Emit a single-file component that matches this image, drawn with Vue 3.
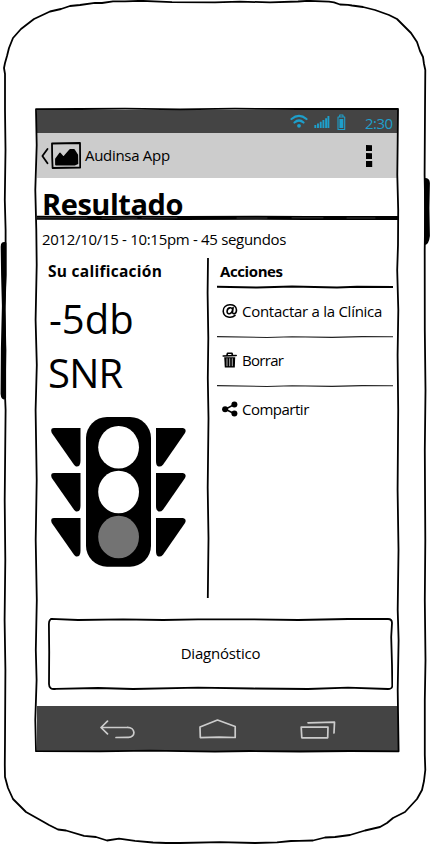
<script setup>
const actions = [
  { label: 'Contactar a la Clínica', icon: 'at' },
  { label: 'Borrar', icon: 'trash' },
  { label: 'Compartir', icon: 'share' },
]
const lampRows = [11, 56, 101]
</script>

<template>
  <main class="phone">
    <svg class="shell" viewBox="0 0 430 844" aria-hidden="true">
      <path d="M5 110V74L4 68L5 63L7 56L9 48L13 38L21 29L34 19L50 11.5L61 9L70 6L80 5L95 2.8L102 3L113 1.3L125 1.4L141 .8L172 2.2L215 2.3L240 1.6L270 2.4L298 1.5L308 .8L329 1.7L334 2.4L340 4.5L348 4.8L352 5.5L363 7L375 10L389 15L397 19L411 33L417 42L420 51L423 57L424 64L425.3 70L425 110L424.6 175L425.3 210L424.7 250L424.8 330L425.5 390L424.8 450L425.3 540L424.8 600L425.5 660L424.8 700L424.8 755L425.3 770L424 781L422 790L417 799L405 812L393 818L387 823L380 827L365 830.5L350 835L335 837L325 837.5L313 840.5L299 840.8L291 841L277 842.4L255 843L220 842.2L180 843L166 843L153 842.5L135 840.8L119 838.7L107 840.5L96 837L84 835.8L66 830.5L58 829.5L49 825L42 821L26 812L17 803L13 799L8 788L5 777L4.8 765L5 740L5.4 670L4.6 620L5.3 560L4.7 500L5.2 450L5.6 410L4.8 390L5.4 350L4.6 310L5.6 275L5.6 230L4.8 200L5.5 150Z" />
      <path class="key" d="M5.5 243Q1.5 242 1.6 247L2 275L2.8 306L1.8 348L1.5 394Q2 400 5.2 398V350L4.5 306L5.5 275Z" />
      <path class="key" d="M425 179Q428.8 179 429 183L428.5 208L429 236Q428 244 425 244Z" />
      <path d="M36 109.2L80 109L125 108.7L180 109.3L235 108.7L300 109L398 109L397.7 140L397.3 175L398.2 210L398 245L397.2 270L398.3 310L397.6 355L398.2 410L397.6 490L398.5 550L397.7 610L398.6 640L397.7 690L398.6 751.3L350 751L300 751.5L250 751L215 751.6L150 750.7L100 751.4L36 751.2L35.3 720L36.6 680L35.8 650L36.8 600L35.7 540L36.7 480L35.6 410L36.8 365L35.6 320L36.7 265L36.3 230L35.3 190L36.7 145Z" />
    </svg>

    <section class="screen">
      <header class="status">
        <svg class="signals" viewBox="0 0 58 20" aria-hidden="true">
          <g class="wifi"><path d="M1.5 7Q9 .8 16.5 7M4.5 10.5Q9 6.5 13.5 10.5" /><circle cx="9" cy="13.8" r="1.9" /></g>
          <path class="bars" d="M25.3 13v3M28 11.5V16M30.7 9.8V16M33.4 8V16M36.1 6.2V16M38.4 4V16" />
          <path class="battery" d="M48 5H54.7V17.5H48ZM49.7 4.5V3H53V4.5" />
          <path class="charge" d="M49.4 7H53.3V16H49.4Z" />
        </svg>
        <span class="clock">2:30</span>
      </header>

      <header class="appbar">
        <svg class="applogo" viewBox="0 0 42 30" aria-hidden="true">
          <path d="M8.5 10L3.4 17L8.5 24.2" />
          <path d="M13 4.5L41 4L41.2 28.5L13.6 29L13.2 19Z" />
          <path class="chart" d="M17 25.5V20L21 14.5L24.5 18.5L31 11H35L38.2 16L38.4 24.5L36 25.5Z" />
        </svg>
        <span class="appname">Audinsa App</span>
        <svg class="more" viewBox="0 0 8 24" aria-hidden="true"><path d="M1 1L7 1.2V7H1ZM1 9L7 9.2V15H1ZM1 17H7.2V23H1Z" /></svg>
      </header>

      <div class="title">
        <h1>Resultado</h1>
        <svg viewBox="0 0 361 6" aria-hidden="true">
          <path class="thick" d="M0 2.8L70 3L95 2.7L145 3.1L220 2.7L270 3L361 3" />
          <path class="shade" d="M0 2.8H50M65 3H100M105 2.8H140M200 3H230M255 2.8H286M310 3H338" />
        </svg>
      </div>
      <p class="date">2012/10/15 - 10:15pm - 45 segundos</p>

      <div class="columns">
        <section class="rating">
          <h2>Su calificación</h2>
          <p class="score"><span class="db">-5db</span><br><span class="snr">SNR</span></p>
          <svg class="lights" viewBox="0 0 136 150" aria-hidden="true">
            <g v-for="y in lampRows" :key="y" :transform="`translate(0 ${y})`">
              <path d="M3 0H29.5V33Q29.5 39 25 38.5Q24 38 23 36.7L.8 5Q-1 0 3 0Z" />
              <path d="M105 0H132Q136 1 134 5L112 36.7Q110 39 107.5 38.5Q105 38 105 33Z" />
            </g>
            <rect x="35" y="0" width="65" height="149.7" rx="21" />
            <ellipse class="off" cx="67.6" cy="30.3" rx="20.4" ry="21.3" />
            <ellipse class="off" cx="67.6" cy="75" rx="20.4" ry="21.3" />
            <ellipse class="lit" cx="67.6" cy="120" rx="20.4" ry="21.3" />
          </svg>
        </section>

        <svg class="divider" viewBox="0 0 4 340" aria-hidden="true"><path d="M2 0L1.6 35L2.3 80L1.8 120L2.5 160L1.7 230L2.5 280L1.8 340" /></svg>

        <section class="actions">
          <h2>Acciones</h2>
          <svg class="rule strong" viewBox="0 0 176 4" aria-hidden="true"><path d="M0 1.8L40 2.5L75 1.6L120 2.4L140 1.8L176 2" /></svg>
          <template v-for="(action, index) in actions" :key="action.icon">
            <div class="action">
              <svg viewBox="0 0 16 16" aria-hidden="true">
                <path v-if="action.icon === 'at'" class="at" d="M13 12.4C10 15.4 1.8 15.2 1.2 8.2C.8 .2 14.6-.6 14.5 7C14.4 11.8 9.8 11.5 10.6 8.5L11.1 4.6M10.7 7C10.3 3.2 5 4.6 5.1 8.6C5.3 12.2 9.7 11.2 10.7 7" />
                <template v-else-if="action.icon === 'trash'">
                  <path class="lid" d="M1.2 4L14.2 3.5M5 3.2L5.5 1.3H10L10.4 3" />
                  <path d="M2.2 5.3H13.2L12.8 15.5H2.8Z" />
                  <path class="slots" d="M5 6.7V13.8M7.7 6.7V13.8M10.3 6.7V13.8" />
                </template>
                <template v-else>
                  <path class="links" d="M12 3.6L3.4 8.2L12 12.5" />
                  <circle cx="3.1" cy="8.2" r="3" /><circle cx="12.4" cy="3.5" r="3" /><circle cx="12.4" cy="12.6" r="3" />
                </template>
              </svg>
              <span :class="action.icon">{{ action.label }}</span>
            </div>
            <svg v-if="index < 2" class="rule" viewBox="0 0 176 4" aria-hidden="true"><path d="M0 1.6L50 2.5L75 1.7L115 2.4L145 1.6L176 1.8" /></svg>
          </template>
        </section>
      </div>

      <button class="diagnosis" type="button">
        <svg viewBox="0 0 345 73" aria-hidden="true"><path d="M3 1.8L30 3L75 2.4L115 3L150 2.3L205 2.4L250 3L300 2L340 2Q344 2 344 6L343.2 20L344 48L344.3 69Q344 72 340 72L300 70.7L260 72L205 71.5L150 70.7L85 72L50 71L8 71.8Q1 73 1 67L1.2 35L.9 7Q1 2 4 1.8" /></svg>
        <span>Diagnóstico</span>
      </button>

      <nav class="navbar">
        <svg viewBox="0 0 36 22" aria-hidden="true"><path d="M7.5 3.2L1 9.5L7.5 15.8M1.5 9.5L27 9.3C36 9 36 19.8 28 19.4L16 19.5" /></svg>
        <svg viewBox="0 0 38 22" aria-hidden="true"><path d="M1 9L18.5 2L36.2 8.5V19.5L20 19.2L1.3 19.6Z" /></svg>
        <svg viewBox="0 0 36 22" aria-hidden="true"><path d="M1.2 9.2L28 9L27.7 19.8H1.8ZM8 4.8L34.5 4.2L34 15" /></svg>
      </nav>
    </section>
  </main>
</template>

<style>
body { background: #fff; }
</style>

<style scoped>
* { box-sizing: border-box; }
.phone { position: relative; width: 430px; height: 844px; padding: 110px 0 0 37px; overflow: hidden; font-family: "Open Sans", "Noto Sans", sans-serif; font-size: 15px; color: #000; }
svg { display: block; flex: none; fill: none; stroke-linecap: round; stroke-linejoin: round; }
.shell { position: absolute; left: 0; top: 0; width: 430px; height: 844px; z-index: 1; pointer-events: none; stroke: #000; stroke-width: 1.8; }
.key { fill: #000; }
.screen { width: 361px; height: 641px; display: flex; flex-direction: column; }
.status { height: 23px; flex: none; background: #444; color: #1e9fcb; display: flex; align-items: center; justify-content: flex-end; padding-right: 6px; }
.signals { width: 58px; height: 20px; margin-right: 17px; stroke: #1e9fcb; }
.wifi { stroke-width: 2.2; }
.wifi circle { fill: #1e9fcb; stroke: none; }
.bars { stroke-width: 1.9; stroke-linecap: butt; }
.battery { stroke-width: 1.1; }
.charge { fill: #1e9fcb; stroke: none; }
.clock { width: 27px; line-height: 20px; padding-top: 2px; letter-spacing: -.5px; white-space: nowrap; }
.appbar { height: 45px; flex: none; background: #ccc; display: flex; align-items: center; padding: 0 25px 0 2px; }
.applogo { width: 42px; height: 30px; margin-top: -4px; stroke: #000; stroke-width: 1.8; }
.chart { fill: #000; }
.appname { margin: -2px 0 0 4px; letter-spacing: -.3px; }
.more { width: 8px; height: 24px; margin-left: auto; fill: #000; }
.title { height: 43px; flex: none; }
h1 { margin: 0; padding: 5px 0 0 5px; height: 37px; font-size: 29px; line-height: 41px; letter-spacing: -.45px; }
.title svg { width: 361px; height: 6px; }
.thick { stroke: #000; stroke-width: 4; }
.shade { stroke: #444; stroke-width: .8; }
.date { margin: 0; height: 37px; flex: none; padding-left: 5px; line-height: 36px; letter-spacing: -.31px; white-space: nowrap; }
.columns { display: flex; height: 340px; flex: none; }
.rating { width: 169px; padding-left: 11px; }
h2 { margin: 0; font-size: 15px; line-height: 28px; letter-spacing: -.4px; white-space: nowrap; }
.rating h2 { font-size: 15.5px; line-height: 27px; height: 28px; letter-spacing: .27px; }
.score { margin: 6px 0 0; height: 108px; font-size: 40px; line-height: 54px; }
.db { margin-left: 1px; }
.snr { letter-spacing: -.8px; }
.lights { width: 136px; height: 150px; margin: 17px 0 0 3px; fill: #000; }
.off { fill: #fff; }
.lit { fill: #737373; }
.divider { width: 4px; height: 340px; stroke: #000; stroke-width: 1.8; stroke-linecap: butt; }
.actions { width: 183px; padding-left: 7px; }
.actions h2 { padding-left: 3px; height: 27px; line-height: 26px; }
.rule { width: 176px; height: 4px; stroke: #222; stroke-width: 1.1; }
.rule.strong { stroke: #000; stroke-width: 2; }
.action { height: 45px; display: flex; align-items: center; padding-left: 5px; }
.rule.strong + .action { height: 46px; }
.action svg { width: 16px; height: 16px; margin-top: -3px; fill: #000; }
.action .at, .action .lid, .action .links { stroke: #000; stroke-width: 1.6; fill: none; }
.slots { stroke: #ddd; stroke-width: .8; }
.action span { margin: -3px 0 0 4px; letter-spacing: -.5px; white-space: nowrap; }
.action span.at { letter-spacing: -.27px; margin-top: -2px; stroke: none; }
.action span.trash { letter-spacing: -.7px; }
.diagnosis { display: grid; place-items: center; width: 345px; height: 73px; flex: none; margin: 19px 0 0 11px; padding: 0; border: 0; background: none; font: inherit; color: inherit; letter-spacing: -.2px; }
.diagnosis svg, .diagnosis span { grid-area: 1 / 1; }
.diagnosis svg { width: 345px; height: 73px; stroke: #000; stroke-width: 1.8; }
.diagnosis span { padding-bottom: 2px; }
.navbar { margin-top: auto; height: 45px; background: #444; display: flex; align-items: center; justify-content: space-between; padding: 0 62px 0 63px; }
.navbar svg { width: 36px; height: 22px; stroke: #ccc; stroke-width: 1.7; }
.navbar svg:nth-child(2) { width: 38px; }
</style>
